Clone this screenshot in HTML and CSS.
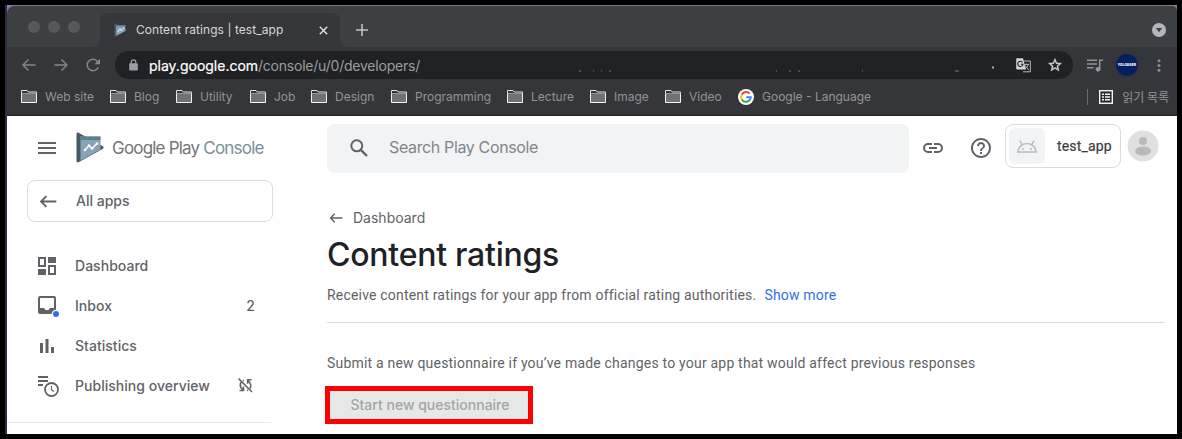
FILE: index.html
```html
<!DOCTYPE html>
<html lang="en">
<head>
<meta charset="utf-8">
<title>Content ratings | test_app</title>
<link rel="stylesheet" href="styles.css">
</head>
<body>
<svg width="0" height="0" class="defs">
  <symbol id="folder" viewBox="0 0 16 13"><path d="M.5 12.500V3.500H15.500V12.500Z" fill="#6f7174" stroke="#f4f4f4"/><path d="M.5 3.500V.5H6L7.200 2H15.500V3.500" fill="#35363a" stroke="#e4e4e4"/></symbol>
  <symbol id="play" viewBox="0 0 28 31"><path d="M2 .6 26.500 14a1.600 1.600 0 0 1 0 3L2.500 30.200Q.5 31 .5 29V2Q.5 0 2 .6Z" fill="#455a64"/><path d="M4.500 4.500H24.500V17.500L4.500 28.500Z" fill="#87a3b5"/><path d="M4.500 4.500H24.500V8H4.500Z" fill="#607d8b"/><path d="M9 18l4-4.500 3 3 5-5" fill="none" stroke="#fff" stroke-width="1.500"/><g fill="#fff"><circle cx="9" cy="18" r="1.300"/><circle cx="13" cy="13.500" r="1.300"/><circle cx="16" cy="16.500" r="1.300"/><circle cx="21" cy="11.500" r="1.300"/></g></symbol>
  <symbol id="back" viewBox="0 0 18 14"><path d="M18 7H1.500M7.300 1.200 1.500 7l5.800 5.800" fill="none" stroke="currentColor" stroke-width="2"/></symbol>
</svg>
<div class="window">
  <div class="tabstrip">
    <div class="lights"><i></i><i></i><i></i></div>
    <div class="tab">
      <svg class="favicon" width="13" height="14"><use href="#play"/></svg>
      <span class="tab-title">Content ratings | test_app</span>
      <svg width="9" height="9" viewBox="0 0 9 9"><path d="M.8.8l7.400 7.400M8.200.8.8 8.200" stroke="#dcdde0" stroke-width="1.500"/></svg>
    </div>
    <svg class="plus" width="12" height="12" viewBox="0 0 12 12"><path d="M6 0v12M0 6h12" stroke="#bfc2c5" stroke-width="1.600"/></svg>
    <svg class="tabsearch" width="14" height="14" viewBox="0 0 14 14"><circle cx="7" cy="7" r="7" fill="#b4b7b9"/><path d="M3.800 5h6.400L7 9.200Z" fill="#3c4043"/></svg>
  </div>
  <div class="toolbar">
    <svg width="14" height="12" viewBox="0 0 14 12"><path d="M13.500 6H1M6.500.6 1 6l5.500 5.400" fill="none" stroke="#85878a" stroke-width="1.400"/></svg>
    <svg class="fwd" width="14" height="12" viewBox="0 0 14 12"><path d="M.5 6H13M7.500.6 13 6l-5.500 5.400" fill="none" stroke="#85878a" stroke-width="1.400"/></svg>
    <svg class="reload" width="15" height="14" viewBox="0 0 15 14"><path d="M12.200 9.200A5.700 5.700 0 1 1 11 3L13 5" fill="none" stroke="#85878a" stroke-width="1.500"/><path d="M14 .7V6.200H8.500Z" fill="#85878a"/></svg>
    <div class="omnibox">
      <svg class="lock" width="9" height="12" viewBox="0 0 9 12"><path d="M2.200 5V3.200a2.300 2.300 0 0 1 4.600 0V5" fill="none" stroke="#9aa0a6" stroke-width="1.200"/><rect x=".2" y="4.200" width="8.600" height="7.300" rx="1" fill="#9aa0a6"/></svg>
      <span class="host">play.google.com</span><span class="path">/console/u/0/developers/</span>
      <svg class="marks" width="420" height="8" viewBox="0 0 420 8"><path d="M4 6h2M18 6h1M26 6h1M34 6h2M201 6h1M214 6h2M223 6h2M287 6h1M380 6h4" stroke="#77797b" stroke-width="1"/><path d="M417 2.500h2" stroke="#aaa" stroke-width="2"/></svg>
      <svg class="translate" width="15" height="15" viewBox="0 0 15 15"><path d="M5 3h9.300v10.800H7" fill="none" stroke="#b7babd"/><path d="M1 .2H7L10 11.500H1Q.2 11.500.2 10.500V1Q.2.2 1 .2Z" fill="#d2d4d6"/><path d="M6.500 4.300A2.600 2.600 0 1 0 7 6.200H4.800" fill="none" stroke="#202124" stroke-width="1.100"/><path d="M8.500 6.500H13M10.800 5.500v1M12.300 6.500Q11.500 9.500 8.800 11M9.300 7.500 12.800 12" fill="none" stroke="#b7babd" stroke-width=".9"/></svg>
      <svg class="star" width="16" height="16" viewBox="0 0 24 24"><path d="M22 9.240l-7.190-.62L12 2 9.190 8.630 2 9.240l5.460 4.730L5.820 21 12 17.270 18.180 21l-1.630-7.030L22 9.240zM12 15.400l-3.760 2.270 1-4.280-3.320-2.880 4.380-.38L12 6.100l1.710 4.040 4.380.38-3.320 2.880 1 4.280L12 15.400z" fill="#d5d7d9" stroke="#d5d7d9" stroke-width=".5"/></svg>
    </div>
    <svg class="media" width="16" height="13" viewBox="0 0 16 13"><path d="M0 1.200h10M0 5h10M0 8.800h6.500M12.700 10V1.200H16" fill="none" stroke="#929497" stroke-width="1.500"/><circle cx="11" cy="10.300" r="2.400" fill="#929497"/></svg>
    <span class="profile">YOLOGGER</span>
    <svg class="dots" width="4" height="13" viewBox="0 0 4 13"><g fill="#898b8e"><circle cx="2" cy="1.700" r="1.500"/><circle cx="2" cy="6.500" r="1.500"/><circle cx="2" cy="11.300" r="1.500"/></g></svg>
  </div>
  <div class="bookmarks">
    <div class="marks-grid">
      <span class="bm"><svg width="16" height="13"><use href="#folder"/></svg>Web site</span>
      <span class="bm"><svg width="16" height="13"><use href="#folder"/></svg>Blog</span>
      <span class="bm"><svg width="16" height="13"><use href="#folder"/></svg>Utility</span>
      <span class="bm"><svg width="16" height="13"><use href="#folder"/></svg>Job</span>
      <span class="bm"><svg width="16" height="13"><use href="#folder"/></svg>Design</span>
      <span class="bm"><svg width="16" height="13"><use href="#folder"/></svg>Programming</span>
      <span class="bm"><svg width="16" height="13"><use href="#folder"/></svg>Lecture</span>
      <span class="bm"><svg width="16" height="13"><use href="#folder"/></svg>Image</span>
      <span class="bm"><svg width="16" height="13"><use href="#folder"/></svg>Video</span>
      <span class="bm"><svg width="16" height="16" viewBox="0 0 16 16"><circle cx="8" cy="8" r="8" fill="#fff"/><g fill="none" stroke-width="2"><path d="M11.700 4.600A4.800 4.800 0 0 0 3.800 5.600" stroke="#ea4335"/><path d="M3.800 5.600A4.800 4.800 0 0 0 3.800 10.400" stroke="#fbbc05"/><path d="M3.800 10.400A4.800 4.800 0 0 0 11.200 11.500" stroke="#34a853"/><path d="M11.200 11.500A4.800 4.800 0 0 0 12.800 8.200H8.200" stroke="#4285f4"/></g></svg>Google - Language</span>
    </div>
    <div class="reading">
      <svg width="14" height="14" viewBox="0 0 14 14"><rect x=".7" y=".7" width="12.600" height="12.600" fill="#2b2c2f" stroke="#f4f4f4" stroke-width="1.400"/><path d="M3 4.200h2M6 4.200h5M3 7h2M6 7h5M3 9.800h2M6 9.800h5" stroke="#f4f4f4" stroke-width="1.500"/></svg>
      <span>읽기 목록</span>
    </div>
  </div>
  <div class="page">
    <aside class="side">
      <div class="brand">
        <svg width="18" height="12" viewBox="0 0 18 12"><path d="M0 1h18M0 6h18M0 11h18" stroke="#5f6368" stroke-width="2"/></svg>
        <svg class="logo" width="28" height="31"><use href="#play"/></svg>
        <span class="wordmark">Google Play <b>Console</b></span>
      </div>
      <div class="allapps"><svg width="18" height="13"><use href="#back"/></svg><span>All apps</span></div>
      <nav>
        <div class="row"><svg width="22" height="20" viewBox="0 0 22 20"><g fill="none" stroke="#5f6368" stroke-width="2"><path d="M1 2h6v8H1ZM11 10h6v8h-6Z"/></g><path d="M10 1h8v6h-8ZM0 13h8v6H0Z" fill="#5f6368"/></svg><span>Dashboard</span></div>
        <div class="row"><svg width="22" height="22" viewBox="0 0 22 22"><path d="M2 1H16a2 2 0 0 1 2 2V17a2 2 0 0 1-2 2H2a2 2 0 0 1-2-2V3A2 2 0 0 1 2 1ZM2 3V13H6L7.500 15h3L12 13h4V3Z" fill="#5f6368" fill-rule="evenodd"/><circle cx="18" cy="19" r="4.300" fill="#fff"/><circle cx="18" cy="19" r="3" fill="#2f6fe4"/></svg><span>Inbox</span><span class="count">2</span></div>
        <div class="row"><svg width="22" height="16" viewBox="0 0 22 16"><path d="M2 5h3v10H2ZM7.500 1h3v14h-3ZM13 9h3v6h-3Z" fill="#5f6368"/></svg><span>Statistics</span></div>
        <div class="row"><svg width="22" height="22" viewBox="0 0 22 22"><path d="M0 2h10M0 6h10M0 10h5" stroke="#5f6368" stroke-width="2"/><circle cx="13.500" cy="14.500" r="6.500" fill="#fff" stroke="#5f6368" stroke-width="1.800"/><path d="M13.500 10.800v4l2.500 1.700" fill="none" stroke="#5f6368" stroke-width="1.100"/></svg><span>Publishing overview</span>
        <svg class="sync" width="15" height="15" viewBox="0 0 15 15"><g fill="none" stroke="#5f6368" stroke-width="1.500"><path d="M.6.6 14 14M6 2.200 5 2.800M3.500 3.800Q1.500 6 2.700 9.300L5 12M1.500 12.500H5.500V8.500M13.500 1.800H9.600V5.800M9.600 2.300 12 5Q13.600 8 12 10.500M10 12l-1 .6"/></g></svg></div>
      </nav>
    </aside>
    <main>
      <div class="top">
        <div class="search"><svg width="18" height="18" viewBox="0 0 18 18"><circle cx="6.800" cy="6.800" r="5.500" fill="none" stroke="#5f6368" stroke-width="2"/><path d="M10.800 10.800 17 17" stroke="#5f6368" stroke-width="2.400"/></svg><span>Search Play Console</span></div>
        <svg class="link" width="20" height="10" viewBox="0 0 20 10"><path d="M9 1H5a4 4 0 0 0 0 8h4M11 1h4a4 4 0 0 1 0 8h-4M6 5h8" fill="none" stroke="#5f6368" stroke-width="2"/></svg>
        <svg class="help" width="20" height="20" viewBox="2 2 20 20"><path d="M11 18h2v-2h-2v2zm1-16C6.480 2 2 6.480 2 12s4.480 10 10 10 10-4.480 10-10S17.520 2 12 2zm0 18c-4.410 0-8-3.590-8-8s3.590-8 8-8 8 3.590 8 8-3.590 8-8 8zm0-14c-2.210 0-4 1.790-4 4h2c0-1.100.9-2 2-2s2 .9 2 2c0 2-3 1.750-3 5h2c0-2.250 3-2.500 3-5 0-2.210-1.790-4-4-4z" fill="#5f6368"/></svg>
        <div class="chip"><span class="thumb"><svg width="20" height="13" viewBox="0 0 20 13"><path d="M.8 12.100a9.200 8.500 0 0 1 18.400 0ZM5 4.500 3 .6M15 4.500l2-3.900" fill="none" stroke="#b9bbbd" stroke-width="1.500"/><circle cx="6" cy="9" r="1.100" fill="#b9bbbd"/><circle cx="14" cy="9" r="1.100" fill="#b9bbbd"/></svg></span><span>test_app</span></div>
        <svg class="avatar" width="32" height="32" viewBox="0 0 32 32"><circle cx="16" cy="16" r="15.500" fill="#e0e0e0"/><circle cx="16" cy="11" r="4" fill="#b9b9b9"/><ellipse cx="16" cy="21" rx="8" ry="4.500" fill="#b9b9b9"/></svg>
      </div>
      <div class="crumb"><svg width="14" height="10"><use href="#back"/></svg><span>Dashboard</span></div>
      <h1>Content ratings</h1>
      <p class="lead"><span>Receive content ratings for your app from official rating authorities.</span><a>Show more</a></p>
      <hr>
      <p class="submit">Submit a new questionnaire if you’ve made changes to your app that would affect previous responses</p>
      <button class="start">Start new questionnaire</button>
    </main>
  </div>
</div>
</body>
</html>
```
FILE: styles.css
```css
* { box-sizing: border-box; }
body { margin: 0; width: 1182px; height: 439px; overflow: hidden; background: #000; padding: 5px; font-family: Roboto, sans-serif; color: #5f6368; }
svg { flex: none; display: block; }
.defs { position: absolute; }
span, a { white-space: nowrap; }
.window { width: 1172px; height: 429px; border-left: 2px solid #302a40; background: #8c7ba8; overflow: hidden; }
.tabstrip { height: 42px; background: #3c4043; border-top: 1px solid #777b7e; border-radius: 8px 5px 0 0; display: flex; align-items: center; padding: 7px 11px 0 21px; }
.lights { display: flex; gap: 8px; margin-top: -7px; }
.lights i { width: 12px; height: 12px; border-radius: 50%; background: #56595c; }
.tab { align-self: stretch; width: 240px; margin-left: 20px; background: #35363a; border-radius: 8px 8px 0 0; display: flex; align-items: center; padding: 0 12px 0 14px; position: relative; }
.tab::before, .tab::after { content: ""; position: absolute; bottom: 0; width: 7px; height: 7px; }
.tab::before { left: -7px; background: radial-gradient(circle at 0 0, transparent 6.5px, #35363a 7px); }
.tab::after { right: -7px; background: radial-gradient(circle at 100% 0, transparent 6.5px, #35363a 7px); }
.tab-title { font: 12px Inter, sans-serif; color: #d6d8da; margin-left: 9px; width: 183px; letter-spacing: 0.06px; padding-bottom: 1px; }
.plus { margin-left: 16px; }
.tabsearch { margin-left: auto; }
.toolbar { height: 35px; background: #35363a; display: flex; align-items: center; padding: 1px 16px 0 15px; }
.fwd { margin-left: 18px; }
.reload { margin-left: 18px; }
.omnibox { width: 958px; height: 28px; margin-left: 14px; border-radius: 14px; background: #202124; display: flex; align-items: center; padding: 0 10px 0 14px; font: 14px Inter, sans-serif; }
.host { color: #fff; margin-left: 11px; width: 109px; -webkit-text-stroke: .2px; }
.path { color: #9a9da0; width: 163px; letter-spacing: -0.22px; }
.marks { margin: 8px 0 0 154px; }
.translate { margin-left: 21px; }
.star { margin-left: auto; }
.media { margin-left: 14px; }
.profile { margin-left: 13px; width: 22px; height: 22px; border-radius: 50%; background: #05205f; color: #fff; font: 900 3.6px/22px Roboto, sans-serif; text-align: center; }
.dots { margin-left: auto; }
.bookmarks { height: 34px; background: #35363a; border-bottom: 1px solid #222326; display: flex; padding: 0 8px 4px 14px; justify-content: space-between; align-items: center; font: 12px Inter, sans-serif; color: #929497; }
.marks-grid { display: grid; grid-template-columns: 89px 66px 74px 61px 80px 116px 83px 75px 73px 140px; }
.bm { display: flex; align-items: center; gap: 8px; letter-spacing: 0; }
.reading { display: flex; align-items: center; height: 16px; border-left: 1px solid #6a6c6f; padding-left: 11px; gap: 9px; font: 12px "Noto Sans CJK KR", sans-serif; }
.page { height: 318px; background: #fff; display: flex; }
.side { width: 320px; padding: 16px 0 0 20px; font-family: Inter, sans-serif; }
.brand { height: 32px; display: flex; align-items: center; padding-left: 11px; }
.logo { margin: -2px 0 0 20px; }
.wordmark { margin-left: 8px; font-size: 17px; letter-spacing: -0.8px; color: #757575; }
.wordmark b { font-weight: 400; color: #78909c; }
.allapps { width: 246px; height: 42px; margin-top: 16px; border: 1px solid #dadce0; border-radius: 8px; display: flex; align-items: center; padding-left: 11px; gap: 19px; font-size: 14px; font-weight: 500; }
.allapps span, .row span, .search span, .crumb span { padding-bottom: 2px; }
nav { margin: 24px 0 0 -20px; width: 264px; height: 177px; border-bottom: 1px solid #e8eaed; }
.row { height: 40px; display: flex; align-items: center; padding: 0 16px 0 31px; font-size: 14px; font-weight: 500; letter-spacing: .03px; }
.row > span:not(.count) { margin-left: 15px; }
.count, .sync { margin-left: auto; }
.sync { margin: -2px 2px 0 auto; }
main { width: 838px; padding-top: 8px; }
.top { height: 49px; display: flex; align-items: flex-start; }
.search { width: 582px; height: 49px; border-radius: 8px; background: #f1f3f4; display: flex; align-items: center; padding: 0 0 1px 23px; gap: 21px; font: 16px Inter, sans-serif; letter-spacing: -0.37px; color: #80868b; }
.search span { letter-spacing: -0.36px; }
.link { margin: 19px 0 0 14px; }
.help { margin: 14px 0 0 28px; }
.chip { width: 116px; height: 44px; margin-left: 14px; border: 1px solid #dadce0; border-radius: 8px; display: flex; align-items: center; padding-left: 3px; gap: 12px; font-size: 14px; letter-spacing: .15px; color: #3c4043; -webkit-text-stroke: .2px; }
.thumb { width: 36px; height: 36px; border-radius: 6px; background: #f1f3f4; display: grid; place-items: center; }
.avatar { margin: 6px 0 0 6px; }
.crumb { height: 20px; margin-top: 35px; padding-left: 2px; display: flex; align-items: center; gap: 10px; font: 14px Inter, sans-serif; }
h1 { margin: 7px 0 0; height: 40px; font: 500 32px/40px Inter, sans-serif; color: #202124; letter-spacing: -0.25px; white-space: nowrap; }
.lead { margin: 10px 0 0; height: 20px; font-size: 14px; line-height: 21px; letter-spacing: .19px; display: flex; gap: 8px; }
.lead a { color: #2f6fe4; }
hr { border: 0; height: 1px; background: #dadce0; margin: 17px 0 0; }
.submit { margin: 30px 0 0; height: 20px; font-size: 14px; line-height: 20px; letter-spacing: .2px; white-space: nowrap; }
.start { display: block; width: 208px; height: 38px; margin: 13px 0 0 -2px; border: 5px solid #f00; background: #e6e8e7; color: #a3a5a5; padding: 0 0 2px 2px; font: 500 14px Inter, sans-serif; white-space: nowrap; }
```
